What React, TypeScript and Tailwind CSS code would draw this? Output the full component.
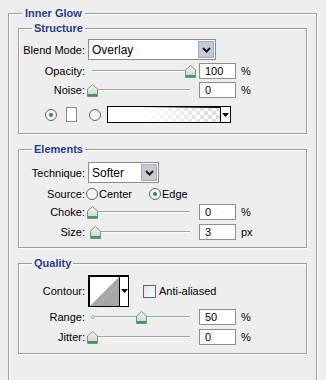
import React from "react";

const etched = "border border-[#9d9d9d] shadow-[inset_1px_1px_0_#fff,1px_1px_0_#fff]";
const legendCls = "font-bold leading-[14px] text-[#1e3c8e]";

const Label = ({ children }: { children: React.ReactNode }) => (
  <div className="w-[66px] shrink-0 text-right leading-[14px]">{children}</div>
);

const Thumb = () => (
  <svg width="11" height="13" viewBox="0 0 11 13">
    <defs>
      <linearGradient id="tg" x1="0" y1="0" x2="0" y2="1">
        <stop offset="0" stopColor="#f6f9f6" />
        <stop offset="1" stopColor="#c5d3c7" />
      </linearGradient>
    </defs>
    <path d="M0.5 5 L5.5 0.5 L10.5 5 V12.5 H0.5 Z" fill="url(#tg)" stroke="#7d8f80" />
    <rect x="1" y="10" width="9" height="2" fill="#3c9c52" />
  </svg>
);

const Slider = ({ value, mark }: { value: number; mark?: boolean }) => (
  <div className="relative flex h-[16px] w-[108px] shrink-0 items-center px-[4px]">
    <div className="h-[2px] w-[98px] border-t border-[#a3a3a3] bg-white" />
    {mark && (
      <div className="absolute left-[3px] top-[6px] h-[4px] w-[4px] rounded-full border border-[#b0b0b0] bg-[#e8e8e8]" />
    )}
    <div className="absolute top-[2px]" style={{ left: 4 + value * 0.98 - 5 }}>
      <Thumb />
    </div>
  </div>
);

const NumBox = ({ value, unit }: { value: string; unit: string }) => (
  <>
    <div className="ml-[3px] h-[16px] w-[37px] shrink-0 border border-[#8f8f8f] bg-white pl-[5px] leading-[14px]">
      {value}
    </div>
    <span className="ml-[5px] leading-[14px]">{unit}</span>
  </>
);

const SliderRow = ({ label, value, text, unit, mark, className }: { label: string; value: number; text: string; unit: string; mark?: boolean; className: string }) => (
  <div className={`flex items-center ${className}`}>
    <Label>{label}</Label>
    <div className="ml-[3px]">
      <Slider value={value} mark={mark} />
    </div>
    <NumBox value={text} unit={unit} />
  </div>
);

const Chevron = () => (
  <svg width="9" height="6" viewBox="0 0 9 6">
    <path d="M1 1 L4.5 4.5 L8 1" fill="none" stroke="#1a1a1a" strokeWidth="2" />
  </svg>
);

const Select = ({ value, width }: { value: string; width: string }) => (
  <div className={`ml-[3px] flex h-[21px] ${width} items-stretch border border-[#8c8c8c] bg-white`}>
    <div className="flex-1 pl-[3px] text-[12px] leading-[20px]">{value}</div>
    <div className="m-[1px] flex w-[16px] items-center justify-center border border-[#a3a9b7] bg-[#c6cad5]">
      <Chevron />
    </div>
  </div>
);

const Radio = ({ on }: { on?: boolean }) => (
  <div className="flex h-[12px] w-[12px] shrink-0 items-center justify-center rounded-full border border-[#5c6670] bg-[#f4f4f4]">
    {on && <div className="h-[4px] w-[4px] rounded-full bg-[#2f8f44]" />}
  </div>
);

const Arrow = () => (
  <svg width="7" height="4" viewBox="0 0 7 4">
    <path d="M0 0 H7 L3.5 4 Z" fill="#000" />
  </svg>
);

export default function App() {
  return (
    <div className="h-[380px] w-[326px] overflow-hidden bg-[#eeeeee] pl-[8px] pr-[9px] pt-[6px] font-['Liberation_Sans',Arial,sans-serif] text-[11px] text-black">
      <fieldset className={`h-[400px] ${etched}`}>
        <legend className={`ml-[13px] px-[3px] ${legendCls}`}>Inner Glow</legend>
        <div className="px-[9px] pt-[1px]">
          {/* Structure */}
          <fieldset className={`pb-[10px] ${etched}`}>
            <legend className={`ml-[13px] px-[2px] ${legendCls}`}>Structure</legend>
            <div className="mt-[4px] flex items-center">
              <Label>Blend Mode:</Label>
              <Select value="Overlay" width="w-[128px]" />
            </div>
            <SliderRow className="mt-[3px]" label="Opacity:" value={100} text="100" unit="%" />
            <SliderRow className="mt-[3px]" label="Noise:" value={0} text="0" unit="%" />
            <div className="mt-[8px] flex h-[17px] items-center pl-[26px]">
              <Radio on />
              <div className="ml-[9px] h-[15px] w-[11px] border border-[#8a8a8a] bg-white" />
              <div className="ml-[12px]">
                <Radio />
              </div>
              <div className="ml-[6px] flex h-[17px] w-[124px] border border-black bg-[repeating-conic-gradient(#d9d9d9_0_25%,#ffffff_0_50%)] bg-[length:8px_8px] shadow-[inset_1px_1px_0_#000]">
                <div className="flex-1 bg-linear-to-r from-white from-30% to-transparent" />
                <div className="flex w-[10px] items-center justify-center border-l border-black bg-white">
                  <Arrow />
                </div>
              </div>
            </div>
          </fieldset>

          {/* Elements */}
          <fieldset className={`mt-[8px] pb-[7px] ${etched}`}>
            <legend className={`ml-[13px] px-[2px] ${legendCls}`}>Elements</legend>
            <div className="mt-[6px] flex items-center">
              <Label>Technique:</Label>
              <Select value="Softer" width="w-[71px]" />
            </div>
            <div className="mt-[4px] flex h-[14px] items-center">
              <Label>Source:</Label>
              <div className="ml-[1px]">
                <Radio />
              </div>
              <span className="ml-[1px] leading-[14px]">Center</span>
              <div className="ml-[17px]">
                <Radio on />
              </div>
              <span className="ml-[1px] leading-[14px]">Edge</span>
            </div>
            <SliderRow className="mt-[3px]" label="Choke:" value={0} text="0" unit="%" />
            <SliderRow className="mt-[4px]" label="Size:" value={3} text="3" unit="px" />
          </fieldset>

          {/* Quality */}
          <fieldset className={`mt-[8px] pb-[8px] ${etched}`}>
            <legend className={`ml-[13px] px-[2px] ${legendCls}`}>Quality</legend>
            <div className="mt-[5px] flex items-center">
              <Label>Contour:</Label>
              <div className="ml-[3px] flex h-[32px] w-[41px] border border-black bg-white shadow-[inset_1px_1px_0_#000]">
                <svg width="30" height="30" viewBox="0 0 30 30" className="shrink-0">
                  <path d="M1 30 L30 1 V30 Z" fill="#a6a6a6" />
                  <path d="M8 30 L30 8" stroke="#b8b8b8" strokeWidth="1" />
                </svg>
                <div className="flex flex-1 items-center justify-center border-l border-black">
                  <Arrow />
                </div>
              </div>
              <div className="ml-[14px] h-[13px] w-[13px] border border-[#5c6670] bg-linear-to-br from-[#dfe3e8] to-white" />
              <span className="ml-[3px] leading-[14px]">Anti-aliased</span>
            </div>
            <SliderRow className="mt-[2px]" label="Range:" value={50} text="50" unit="%" mark />
            <SliderRow className="mt-[4px]" label="Jitter:" value={0} text="0" unit="%" />
          </fieldset>
        </div>
      </fieldset>
    </div>
  );
}
